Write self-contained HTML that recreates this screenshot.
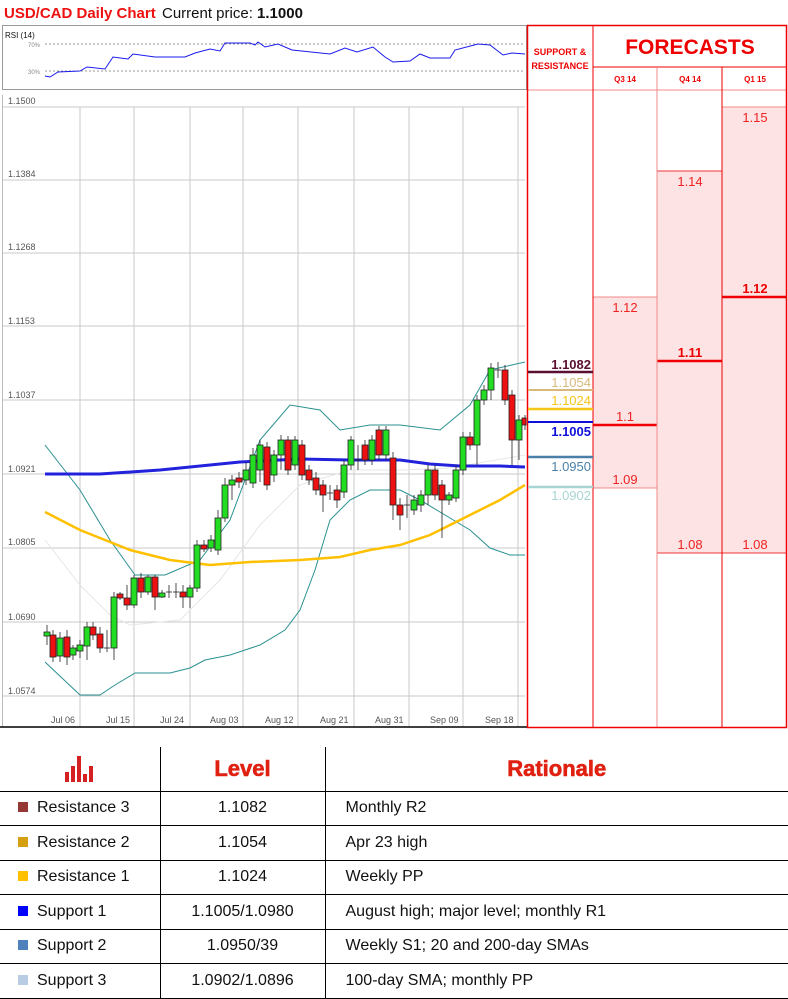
<!DOCTYPE html>
<html><head><meta charset="utf-8">
<style>
body{margin:0;width:788px;height:999px;background:#fff;overflow:hidden;font-family:"Liberation Sans",sans-serif;position:relative}
svg{position:absolute;left:0;top:0}
table{position:absolute;left:0;top:747px;width:788px;border-collapse:collapse;table-layout:fixed;font-size:16px;color:#111}
td{border-top:1.5px solid #000;height:34.5px;padding:0;box-sizing:border-box;white-space:nowrap;overflow:hidden}
td.c2{border-left:1.5px solid #000;text-align:center}
td.c3{border-left:1.5px solid #000;padding-left:20px}
td.c1{padding-left:18px}
.sq{display:inline-block;width:10px;height:10px;margin-right:9px;vertical-align:0}
.hd td{height:44px;border-top:none}
.h{font-family:"Liberation Sans",sans-serif;font-weight:900;color:#e02010;font-size:22px;-webkit-text-stroke:0.6px #e02010}
</style></head><body>
<svg width="788" height="745" viewBox="0 0 788 745" font-family="Liberation Sans, sans-serif">
<text x="4" y="18" font-size="15" font-weight="bold" fill="#ee1111">USD/CAD Daily Chart</text>
<text x="162" y="18" font-size="15" fill="#111">Current price: <tspan font-weight="bold">1.1000</tspan></text>
<rect x="2.5" y="25.5" width="524" height="64" fill="#fff" stroke="#999"/>
<text x="5" y="38" font-size="8" fill="#111">RSI (14)</text>
<text x="28" y="47" font-size="6" fill="#888">70%</text><text x="28" y="74" font-size="6" fill="#888">30%</text>
<line x1="45" y1="44" x2="525" y2="44" stroke="#777" stroke-dasharray="2,2" stroke-width="0.7"/>
<line x1="45" y1="71" x2="525" y2="71" stroke="#777" stroke-dasharray="2,2" stroke-width="0.7"/>
<polyline fill="none" stroke="#1a1aee" stroke-width="1" points="45,76 50,77 58,72 80,71 87,67 105,69 113,57 128,59 133,54 155,57 185,57 195,53 210,49 220,51 225,43 250,43 255,45 258,42 265,47 278,44 292,50 330,54 345,48 357,52 373,47 385,57 393,62 410,61 420,54 430,58 450,58 455,50 478,44 490,45 503,55 512,53 525,54"/>
<g stroke="#c8c8c8" stroke-width="1">
<line x1="2" y1="107" x2="525" y2="107"/><line x1="2" y1="180" x2="525" y2="180"/><line x1="2" y1="253" x2="525" y2="253"/><line x1="2" y1="326" x2="525" y2="326"/><line x1="2" y1="400" x2="525" y2="400"/><line x1="2" y1="474" x2="525" y2="474"/><line x1="2" y1="548" x2="525" y2="548"/><line x1="2" y1="622" x2="525" y2="622"/><line x1="2" y1="696" x2="525" y2="696"/>
<line x1="80" y1="107" x2="80" y2="727"/><line x1="134" y1="107" x2="134" y2="727"/><line x1="190" y1="107" x2="190" y2="727"/><line x1="243" y1="107" x2="243" y2="727"/><line x1="298" y1="107" x2="298" y2="727"/><line x1="354" y1="107" x2="354" y2="727"/><line x1="409" y1="107" x2="409" y2="727"/><line x1="463" y1="107" x2="463" y2="727"/><line x1="518" y1="107" x2="518" y2="727"/>
</g>
<line x1="2.5" y1="95" x2="2.5" y2="727" stroke="#bbb"/>
<g font-size="9" fill="#555">
<text x="8" y="104">1.1500</text><text x="8" y="177">1.1384</text><text x="8" y="250">1.1268</text><text x="8" y="324">1.1153</text><text x="8" y="398">1.1037</text><text x="8" y="472">1.0921</text><text x="8" y="545">1.0805</text><text x="8" y="620">1.0690</text><text x="8" y="694">1.0574</text>
<text x="51" y="723">Jul 06</text><text x="106" y="723">Jul 15</text><text x="160" y="723">Jul 24</text><text x="210" y="723">Aug 03</text><text x="265" y="723">Aug 12</text><text x="320" y="723">Aug 21</text><text x="375" y="723">Aug 31</text><text x="430" y="723">Sep 09</text><text x="485" y="723">Sep 18</text>
</g>
<line x1="0" y1="727" x2="527" y2="727" stroke="#000" stroke-width="1.5"/>
<polyline fill="none" stroke="#e6e6e6" stroke-width="1" points="45,540 80,585 110,615 130,625 180,620 220,580 260,525 300,485 350,470 400,470 450,468 525,455"/>
<polyline fill="none" stroke="#2a9090" stroke-width="1" points="45,445 80,490 110,540 135,575 165,575 200,560 230,520 260,440 290,405 320,410 340,430 370,425 400,425 440,430 470,405 490,370 525,362"/>
<polyline fill="none" stroke="#2a9090" stroke-width="1" points="45,662 80,695 100,695 115,685 135,673 170,673 190,668 205,660 230,655 260,645 285,630 300,610 315,570 330,520 350,500 370,490 400,490 420,500 440,512 470,530 490,548 510,555 525,555"/>
<polyline fill="none" stroke="#ffc000" stroke-width="2.5" points="45,512 80,530 130,550 170,560 210,565 250,562 300,560 340,557 370,550 400,545 430,535 450,525 480,510 500,500 525,485"/>
<polyline fill="none" stroke="#2222dd" stroke-width="3" points="45,474 100,474 160,470 200,466 240,462 300,459 350,460 400,460 430,464 460,466 500,466 525,467"/>
<g stroke="#222" stroke-width="0.8">
<line x1="47" y1="625" x2="47" y2="645"/><rect x="44" y="632" width="6" height="4" fill="#22dd22"/>
<line x1="53" y1="630" x2="53" y2="662"/><rect x="50" y="635" width="6" height="22" fill="#ee1111"/>
<line x1="60" y1="632" x2="60" y2="662"/><rect x="57" y="638" width="6" height="18" fill="#22dd22"/>
<line x1="67" y1="630" x2="67" y2="665"/><rect x="64" y="637" width="6" height="20" fill="#ee1111"/>
<line x1="73" y1="645" x2="73" y2="660"/><rect x="70" y="648" width="6" height="7" fill="#22dd22"/>
<line x1="80" y1="640" x2="80" y2="658"/><rect x="77" y="645" width="6" height="6" fill="#22dd22"/>
<line x1="87" y1="622" x2="87" y2="660"/><rect x="84" y="627" width="6" height="19" fill="#22dd22"/>
<line x1="93" y1="622" x2="93" y2="640"/><rect x="90" y="627" width="6" height="8" fill="#ee1111"/>
<line x1="100" y1="627" x2="100" y2="653"/><rect x="97" y="634" width="6" height="14" fill="#ee1111"/>
<line x1="107" y1="630" x2="107" y2="652"/><line x1="104" y1="648" x2="110" y2="648"/>
<line x1="114" y1="592" x2="114" y2="660"/><rect x="111" y="597" width="6" height="51" fill="#22dd22"/>
<line x1="120" y1="592" x2="120" y2="600"/><rect x="117" y="594" width="6" height="4" fill="#ee1111"/>
<line x1="127" y1="585" x2="127" y2="610"/><rect x="124" y="598" width="6" height="7" fill="#ee1111"/>
<line x1="134" y1="575" x2="134" y2="608"/><rect x="131" y="578" width="6" height="27" fill="#22dd22"/>
<line x1="141" y1="573" x2="141" y2="598"/><rect x="138" y="578" width="6" height="14" fill="#ee1111"/>
<line x1="148" y1="575" x2="148" y2="595"/><rect x="145" y="577" width="6" height="15" fill="#22dd22"/>
<line x1="155" y1="575" x2="155" y2="610"/><rect x="152" y="577" width="6" height="20" fill="#ee1111"/>
<line x1="162" y1="590" x2="162" y2="598"/><rect x="159" y="593" width="6" height="4" fill="#22dd22"/>
<line x1="169" y1="585" x2="169" y2="598"/><line x1="166" y1="592" x2="172" y2="592"/>
<line x1="176" y1="583" x2="176" y2="598"/><line x1="173" y1="592" x2="179" y2="592"/>
<line x1="183" y1="585" x2="183" y2="608"/><rect x="180" y="592" width="6" height="5" fill="#ee1111"/>
<line x1="190" y1="585" x2="190" y2="608"/><rect x="187" y="588" width="6" height="9" fill="#22dd22"/>
<line x1="197" y1="540" x2="197" y2="592"/><rect x="194" y="545" width="6" height="43" fill="#22dd22"/>
<line x1="204" y1="540" x2="204" y2="552"/><rect x="201" y="545" width="6" height="4" fill="#ee1111"/>
<line x1="211" y1="535" x2="211" y2="552"/><rect x="208" y="540" width="6" height="8" fill="#22dd22"/>
<line x1="218" y1="510" x2="218" y2="555"/><rect x="215" y="518" width="6" height="32" fill="#22dd22"/>
<line x1="225" y1="478" x2="225" y2="522"/><rect x="222" y="485" width="6" height="33" fill="#22dd22"/>
<line x1="232" y1="475" x2="232" y2="500"/><rect x="229" y="480" width="6" height="5" fill="#22dd22"/>
<line x1="239" y1="472" x2="239" y2="488"/><rect x="236" y="478" width="6" height="4" fill="#ee1111"/>
<line x1="246" y1="462" x2="246" y2="485"/><rect x="243" y="470" width="6" height="10" fill="#22dd22"/>
<line x1="253" y1="448" x2="253" y2="488"/><rect x="250" y="455" width="6" height="28" fill="#22dd22"/>
<line x1="260" y1="440" x2="260" y2="482"/><rect x="257" y="445" width="6" height="25" fill="#22dd22"/>
<line x1="267" y1="442" x2="267" y2="490"/><rect x="264" y="447" width="6" height="38" fill="#ee1111"/>
<line x1="274" y1="450" x2="274" y2="482"/><rect x="271" y="455" width="6" height="20" fill="#22dd22"/>
<line x1="281" y1="435" x2="281" y2="470"/><rect x="278" y="440" width="6" height="15" fill="#22dd22"/>
<line x1="288" y1="436" x2="288" y2="475"/><rect x="285" y="440" width="6" height="30" fill="#ee1111"/>
<line x1="295" y1="436" x2="295" y2="470"/><rect x="292" y="440" width="6" height="25" fill="#22dd22"/>
<line x1="302" y1="440" x2="302" y2="480"/><rect x="299" y="445" width="6" height="30" fill="#ee1111"/>
<line x1="309" y1="465" x2="309" y2="485"/><rect x="306" y="470" width="6" height="10" fill="#ee1111"/>
<line x1="316" y1="472" x2="316" y2="495"/><rect x="313" y="478" width="6" height="12" fill="#ee1111"/>
<line x1="323" y1="480" x2="323" y2="512"/><rect x="320" y="485" width="6" height="10" fill="#ee1111"/>
<line x1="330" y1="485" x2="330" y2="500"/><line x1="327" y1="493" x2="333" y2="493"/>
<line x1="337" y1="485" x2="337" y2="508"/><rect x="334" y="490" width="6" height="10" fill="#ee1111"/>
<line x1="344" y1="460" x2="344" y2="498"/><rect x="341" y="465" width="6" height="27" fill="#22dd22"/>
<line x1="351" y1="436" x2="351" y2="470"/><rect x="348" y="440" width="6" height="25" fill="#22dd22"/>
<line x1="358" y1="445" x2="358" y2="470"/><line x1="355" y1="460" x2="361" y2="460"/>
<line x1="365" y1="440" x2="365" y2="465"/><rect x="362" y="445" width="6" height="15" fill="#ee1111"/>
<line x1="372" y1="435" x2="372" y2="465"/><rect x="369" y="440" width="6" height="20" fill="#22dd22"/>
<line x1="379" y1="426" x2="379" y2="460"/><rect x="376" y="430" width="6" height="25" fill="#ee1111"/>
<line x1="386" y1="426" x2="386" y2="460"/><rect x="383" y="430" width="6" height="25" fill="#22dd22"/>
<line x1="393" y1="452" x2="393" y2="520"/><rect x="390" y="458" width="6" height="47" fill="#ee1111"/>
<line x1="400" y1="498" x2="400" y2="530"/><rect x="397" y="505" width="6" height="10" fill="#ee1111"/>
<line x1="407" y1="495" x2="407" y2="518"/><line x1="404" y1="505" x2="410" y2="505"/>
<line x1="414" y1="495" x2="414" y2="515"/><rect x="411" y="500" width="6" height="10" fill="#22dd22"/>
<line x1="421" y1="490" x2="421" y2="512"/><rect x="418" y="495" width="6" height="10" fill="#22dd22"/>
<line x1="428" y1="465" x2="428" y2="505"/><rect x="425" y="470" width="6" height="25" fill="#22dd22"/>
<line x1="435" y1="465" x2="435" y2="500"/><rect x="432" y="470" width="6" height="25" fill="#ee1111"/>
<line x1="442" y1="480" x2="442" y2="538"/><rect x="439" y="485" width="6" height="15" fill="#ee1111"/>
<line x1="449" y1="492" x2="449" y2="505"/><rect x="446" y="495" width="6" height="5" fill="#22dd22"/>
<line x1="456" y1="465" x2="456" y2="502"/><rect x="453" y="470" width="6" height="28" fill="#22dd22"/>
<line x1="463" y1="432" x2="463" y2="475"/><rect x="460" y="437" width="6" height="33" fill="#22dd22"/>
<line x1="470" y1="432" x2="470" y2="450"/><rect x="467" y="437" width="6" height="8" fill="#ee1111"/>
<line x1="477" y1="395" x2="477" y2="465"/><rect x="474" y="400" width="6" height="45" fill="#22dd22"/>
<line x1="484" y1="385" x2="484" y2="405"/><rect x="481" y="390" width="6" height="10" fill="#22dd22"/>
<line x1="491" y1="363" x2="491" y2="400"/><rect x="488" y="368" width="6" height="22" fill="#22dd22"/>
<line x1="498" y1="362" x2="498" y2="378"/><line x1="495" y1="370" x2="501" y2="370"/>
<line x1="505" y1="365" x2="505" y2="405"/><rect x="502" y="370" width="6" height="30" fill="#ee1111"/>
<line x1="512" y1="390" x2="512" y2="465"/><rect x="509" y="395" width="6" height="45" fill="#ee1111"/>
<line x1="519" y1="415" x2="519" y2="460"/><rect x="516" y="420" width="6" height="20" fill="#22dd22"/>
<line x1="525" y1="415" x2="525" y2="430"/><rect x="522" y="418" width="4" height="7" fill="#ee1111"/>
</g>
<rect x="593" y="297" width="64" height="191" fill="#fde3e3"/>
<rect x="657" y="171" width="65" height="382" fill="#fde3e3"/>
<rect x="722" y="107" width="65" height="446" fill="#fde3e3"/>
<line x1="593" y1="297" x2="657" y2="297" stroke="#f28a8a"/>
<line x1="593" y1="488" x2="657" y2="488" stroke="#f28a8a"/>
<line x1="657" y1="171" x2="722" y2="171" stroke="#e33"/>
<line x1="722" y1="107" x2="787" y2="107" stroke="#f28a8a"/>
<line x1="657" y1="553" x2="787" y2="553" stroke="#e33"/>
<line x1="593" y1="425" x2="657" y2="425" stroke="#e00" stroke-width="2.5"/>
<line x1="657" y1="361" x2="722" y2="361" stroke="#e00" stroke-width="2.5"/>
<line x1="722" y1="297" x2="787" y2="297" stroke="#e00" stroke-width="2.5"/>
<line x1="593" y1="67" x2="787" y2="67" stroke="#e00"/>
<line x1="527" y1="90" x2="787" y2="90" stroke="#f28a8a"/>
<line x1="593" y1="25" x2="593" y2="727" stroke="#e00"/>
<line x1="657" y1="67" x2="657" y2="727" stroke="#f28a8a"/>
<line x1="722" y1="67" x2="722" y2="727" stroke="#e00"/>
<rect x="527.5" y="25.5" width="259" height="702" fill="none" stroke="#e00" stroke-width="1.5"/>
<g fill="#e00" font-weight="bold" text-anchor="middle">
<text x="560" y="55" font-size="9">SUPPORT &amp;</text><text x="560" y="69" font-size="9">RESISTANCE</text>
<text x="690" y="54" font-size="21">FORECASTS</text>
<text x="625" y="82" font-size="8">Q3 14</text><text x="690" y="82" font-size="8">Q4 14</text><text x="755" y="82" font-size="8">Q1 15</text>
</g>
<g fill="#e22" font-size="13" text-anchor="middle">
<text x="755" y="122">1.15</text><text x="690" y="186">1.14</text><text x="625" y="312">1.12</text>
<text x="755" y="293" font-weight="bold" fill="#e00">1.12</text><text x="690" y="357" font-weight="bold" fill="#e00">1.11</text>
<text x="625" y="421">1.1</text><text x="625" y="484">1.09</text><text x="690" y="549">1.08</text><text x="755" y="549">1.08</text>
</g>
<line x1="528" y1="372" x2="593" y2="372" stroke="#5a1030" stroke-width="2.5"/>
<line x1="528" y1="390" x2="593" y2="390" stroke="#d9b97a" stroke-width="2"/>
<line x1="528" y1="409" x2="593" y2="409" stroke="#f5c518" stroke-width="2.5"/>
<line x1="528" y1="422" x2="593" y2="422" stroke="#1010dd" stroke-width="2"/>
<line x1="528" y1="457" x2="593" y2="457" stroke="#4a7fa8" stroke-width="2.5"/>
<line x1="528" y1="487" x2="593" y2="487" stroke="#a8d4d4" stroke-width="2.5"/>
<g font-size="13" text-anchor="end">
<text x="591" y="369" fill="#5a1030" font-weight="bold">1.1082</text>
<text x="591" y="387" fill="#d9b97a">1.1054</text>
<text x="591" y="405" fill="#f5c518">1.1024</text>
<text x="591" y="436" fill="#1010dd" font-weight="bold">1.1005</text>
<text x="591" y="471" fill="#4a7fa8">1.0950</text>
<text x="591" y="500" fill="#a8d4d4">1.0902</text>
</g>
</svg>
<table>
<colgroup><col style="width:160px"><col style="width:165px"><col style="width:463px"></colgroup>
<tr class="hd"><td class="c1" style="padding-left:0;text-align:center"><svg width="30" height="30" style="position:relative;vertical-align:middle" viewBox="0 0 30 30"><g fill="#d42020"><rect x="0" y="18" width="4" height="10"/><rect x="6" y="12" width="4" height="16"/><rect x="12" y="2" width="4" height="26"/><rect x="18" y="20" width="4" height="8"/><rect x="24" y="12" width="4" height="16"/></g></svg></td><td class="c2"><span class="h">Level</span></td><td class="c3" style="text-align:center;padding-left:0"><span class="h">Rationale</span></td></tr>
<tr><td class="c1"><span class="sq" style="background:#953735"></span>Resistance 3</td><td class="c2">1.1082</td><td class="c3">Monthly R2</td></tr>
<tr><td class="c1"><span class="sq" style="background:#d4a010"></span>Resistance 2</td><td class="c2">1.1054</td><td class="c3">Apr 23 high</td></tr>
<tr><td class="c1"><span class="sq" style="background:#ffc000"></span>Resistance 1</td><td class="c2">1.1024</td><td class="c3">Weekly PP</td></tr>
<tr><td class="c1"><span class="sq" style="background:#0000ff"></span>Support 1</td><td class="c2">1.1005/1.0980</td><td class="c3">August high; major level; monthly R1</td></tr>
<tr><td class="c1"><span class="sq" style="background:#4f81bd"></span>Support 2</td><td class="c2">1.0950/39</td><td class="c3">Weekly S1; 20 and 200-day SMAs</td></tr>
<tr><td class="c1" style="border-bottom:1.5px solid #000"><span class="sq" style="background:#b8cce4"></span>Support 3</td><td class="c2" style="border-bottom:1.5px solid #000">1.0902/1.0896</td><td class="c3" style="border-bottom:1.5px solid #000">100-day SMA; monthly PP</td></tr>
</table>
</body></html>
